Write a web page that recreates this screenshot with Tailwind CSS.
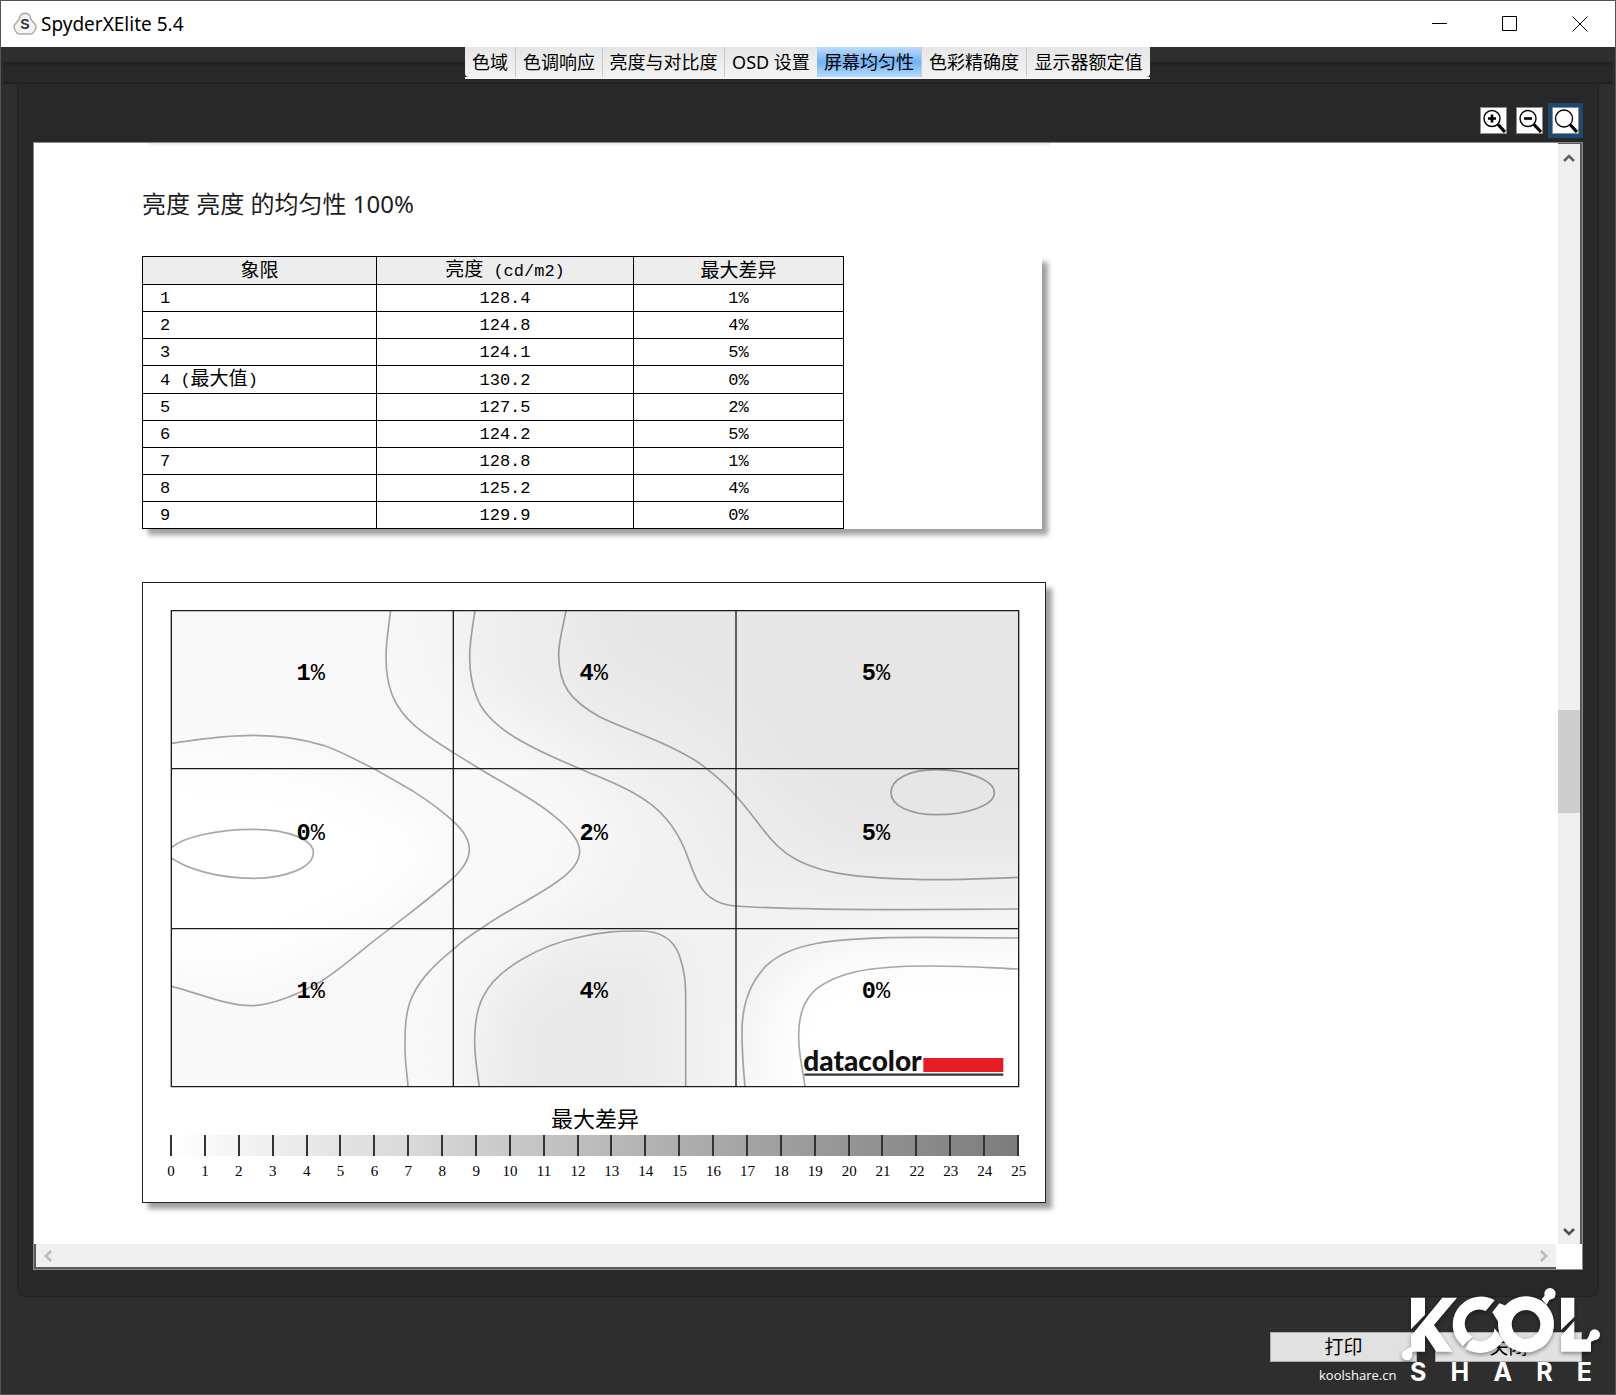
<!DOCTYPE html>
<html lang="zh-CN">
<head>
  <meta charset="UTF-8">
  <meta name="viewport" content="width=device-width, initial-scale=1.0">
  <title>SpyderXElite 5.4</title>
  <script src="https://cdn.jsdelivr.net/npm/@tailwindcss/browser@4"></script>
</head>
<body class="relative flex min-h-screen flex-col border border-[#4e5658] bg-[#2e2e2e] font-['Noto_Sans','Noto_Sans_CJK_SC',sans-serif] text-black">

  <!-- title bar -->
  <header class="flex h-[46px] items-center bg-white">
    <svg class="ml-3 h-6 w-6" viewBox="0 0 24 24" aria-hidden="true">
      <path d="M9 2 Q12 0.500 15 2 Q17.500 3.500 18 7.500 L22.500 13 Q23.500 15 22 18 L20.500 20.500 Q19.500 22 17 22 H7 Q4.500 22 3.500 20.500 L2 18 Q0.500 15 1.500 13 L6 7.500 Q6.500 3.500 9 2 Z" fill="#f4f4f4" stroke="#a9a9a9" stroke-width="1.400"/>
      <text x="12" y="17" text-anchor="middle" font-family="Liberation Sans" font-weight="bold" font-size="14" fill="#333">S</text>
    </svg>
    <h1 class="ml-1 text-[19px] leading-6">SpyderXElite 5.4</h1>
    <div class="ml-auto flex h-full">
      <button class="flex w-[70px] items-center justify-center" aria-label="最小化">
        <svg class="h-4 w-4" viewBox="0 0 16 16" stroke="#000"><path d="M0 7.500H15"/></svg>
      </button>
      <button class="flex w-[70px] items-center justify-center" aria-label="最大化">
        <svg class="h-4 w-4" viewBox="0 0 16 16" stroke="#000" fill="none"><path d="M.5 .5H14.500V14.500H.5Z"/></svg>
      </button>
      <button class="flex w-[70px] items-center justify-center" aria-label="关闭窗口">
        <svg class="h-4 w-4" viewBox="0 0 16 16" stroke="#000"><path d="M.5 .5L15.500 15.500M15.500 .5L.5 15.500"/></svg>
      </button>
    </div>
  </header>

  <!-- tabs -->
  <nav class="mx-0.5 flex h-[37px] items-start justify-center bg-[linear-gradient(#2e2e2e_0_14px,#212121_16px,#282828_20px,#282828_35px,#202020_36px)]">
    <div class="mr-px flex h-8 border-b-2 border-[#f4f4f4] text-lg leading-6">
      <button class="w-[51px] rounded-bl border-r border-[#c9c9c9] bg-linear-to-b from-[#e6e6e6] to-[#f2f2f2]">色域</button>
      <button class="w-[87px] border-r border-[#c9c9c9] bg-linear-to-b from-[#e6e6e6] to-[#f2f2f2]">色调响应</button>
      <button class="w-[122px] border-r border-[#c9c9c9] bg-linear-to-b from-[#e6e6e6] to-[#f2f2f2]">亮度与对比度</button>
      <button class="w-[92px] bg-linear-to-b from-[#e6e6e6] to-[#f4f4f4]">OSD 设置</button>
      <button class="w-[105px] border-r border-[#c9c9c9] bg-linear-to-b from-[#bcdcfb] via-[#6fb2f5] to-[#b4dcff]">屏幕均匀性</button>
      <button class="w-[105px] border-r border-[#c9c9c9] bg-linear-to-b from-[#e6e6e6] to-[#f2f2f2]">色彩精确度</button>
      <button class="w-[123px] rounded-br bg-linear-to-b from-[#e6e6e6] to-[#f2f2f2]">显示器额定值</button>
    </div>
  </nav>

  <main class="mx-4 flex flex-1 flex-col rounded-b-lg border-x border-b border-[#212121] bg-[#282828] px-[15px] pb-[26px] pt-[19px]">
    <!-- zoom tools -->
    <div class="mb-1 flex items-center justify-end gap-[5px]">
      <button class="p-1" aria-label="放大">
        <svg class="h-[27px] w-[27px] border border-[#8c8c8c] bg-white" viewBox="0 0 25 25" fill="none" stroke="#000">
          <circle cx="11" cy="10.500" r="8" stroke-width="1.400"/><path d="M17 16.500L24 24" stroke-width="3.200"/><path d="M7 10.500H15M11 6.500V14.500" stroke-width="2.600"/>
        </svg>
      </button>
      <button class="-ml-1 p-1" aria-label="缩小">
        <svg class="h-[27px] w-[27px] border border-[#8c8c8c] bg-white" viewBox="0 0 25 25" fill="none" stroke="#000">
          <circle cx="11" cy="10.500" r="8" stroke-width="1.400"/><path d="M17 16.500L24 24" stroke-width="3.200"/><path d="M7 10.500H15" stroke-width="2.600"/>
        </svg>
      </button>
      <button class="-ml-1 bg-[#1d4a70] p-1" aria-label="原始大小">
        <svg class="h-[27px] w-[27px] border border-[#8c8c8c] bg-white" viewBox="0 0 25 25" fill="none" stroke="#000">
          <circle cx="11" cy="10.500" r="8.500" stroke-width="1.300"/><path d="M17 16.500L24 24" stroke-width="3.200"/>
        </svg>
      </button>
    </div>

    <!-- report view -->
    <div class="flex flex-1 flex-col border border-[#8a8a8a] bg-white">
      <div class="flex flex-1">
        <div class="flex-1 overflow-hidden pl-[108px]">
          <div class="ml-1.5 h-1 w-[902px] bg-linear-to-b from-[#e9e9e9] to-white"></div>
          <h2 class="mt-[41px] text-2xl leading-8 text-[#1c1c1c]">亮度 亮度 的均匀性 100%</h2>

          <div class="mt-9 w-[900px] bg-white shadow-[6px_6px_5px_#a0a0a0]">
            <table class="w-[702px] table-fixed border-collapse text-center font-['Liberation_Mono','Noto_Sans_CJK_SC',monospace] text-[17px] leading-6">
              <thead>
                <tr class="h-[27px] bg-[#ededed]">
                  <th class="w-[234px] border border-black px-0 pb-0 pt-0.5 text-[19px] font-normal">象限</th>
                  <th class="w-[257px] border border-black px-0 pb-0 pt-0.5 font-normal"><span class="text-[19px]">亮度</span> (cd/m2)</th>
                  <th class="w-[210px] border border-black px-0 pb-0 pt-0.5 text-[19px] font-normal">最大差异</th>
                </tr>
              </thead>
              <tbody id="rows"></tbody>
            </table>
          </div>

          <div class="mt-[53px] w-[904px] border border-[#222] bg-white pb-5 pl-[27px] pr-[25px] pt-[27px] shadow-[6px_6px_5px_#a0a0a0]">
            <svg class="block w-full" viewBox="90 84 2550 1434" role="img" aria-label="均匀性分布">
              <defs>
                <clipPath id="map"><path d="M94 86H2636V1514H94Z"/></clipPath>
                <filter id="soft" filterUnits="userSpaceOnUse" x="-600" y="-600" width="3900" height="2900"><feGaussianBlur stdDeviation="80"/></filter>
              </defs>
              <g clip-path="url(#map)">
                <path d="M0 0H2800V1600H0Z" fill="#f8f8f8"/>
                <g filter="url(#soft)">
                  <path d="M-400 510L340 530L600 590L900 760L900 850L720 1000L340 1180L-400 1120Z" fill="#fff"/>
                  <path d="M880 -400V300L1400 640V880L1000 1200L950 1950H3100V-400Z" fill="#f2f2f2"/>
                  <path d="M1060 -400V300L1400 520L1640 650L1760 920H3100V-400Z" fill="#ececec"/>
                  <path d="M1330 -400V260L1700 440L1950 700L2100 820H3100V-400Z" fill="#e6e6e6"/>
                  <path d="M1060 1950V1260L1250 1120L1600 1080V1950Z" fill="#e9e9e9"/>
                  <path d="M1870 1950V1280L2000 1140L2200 1090H3100V1950Z" fill="#fff"/>
                  <path d="M1960 1950V1300L2100 1160L2200 1110H3100V1950Z" fill="#fff"/>
                </g>
                <g fill="none" stroke="#000" stroke-opacity=".34" stroke-width="5">
                  <path d="M752 86C745 140 738 180 738 225C738 280 745 310 757 340C790 420 860 460 940 512L1015 558C1100 610 1180 650 1240 700C1290 740 1319 775 1319 808C1319 840 1295 870 1250 900C1180 950 1100 985 1030 1035C990 1060 965 1078 940 1102C880 1150 830 1200 808 1265C795 1310 795 1350 795 1400C795 1440 802 1480 804 1514"/>
                  <path d="M94 484C160 475 240 460 340 460C430 460 500 475 550 490C600 507 650 535 705 562L820 628C870 660 910 690 940 718C975 750 988 775 988 802C988 830 970 860 940 888C880 940 820 985 750 1040C680 1090 600 1165 540 1200C470 1240 390 1271 335 1271C260 1271 180 1235 94 1213"/>
                  <path d="M94 797C130 765 230 742 340 742C450 742 520 775 520 812C520 855 440 889 340 889C230 889 140 860 94 828"/>
                  <path d="M1005 86C997 140 989 180 989 225C989 280 1000 320 1010 345C1040 430 1150 490 1320 560C1400 595 1470 620 1530 665C1585 705 1620 760 1645 830C1670 900 1690 965 1788 972C1900 980 2100 983 2300 983L2636 981"/>
                  <path d="M1278 86C1268 140 1256 180 1256 215C1256 310 1290 355 1380 405C1440 435 1520 460 1580 490C1630 515 1665 530 1700 560C1735 588 1765 615 1788 642C1850 710 1880 770 1940 815C2010 865 2110 893 2400 893C2490 893 2560 888 2636 886"/>
                  <path d="M2253 632C2253 590 2310 563 2390 563C2480 563 2563 595 2563 632C2563 670 2480 698 2390 698C2310 698 2253 670 2253 632Z"/>
                  <path d="M1018 1514C1012 1470 1004 1430 1004 1380C1004 1320 1010 1280 1030 1243C1070 1160 1200 1090 1320 1065C1390 1048 1440 1047 1500 1047C1560 1047 1600 1070 1618 1120C1635 1170 1637 1200 1637 1260V1514"/>
                  <path d="M1815 1514C1810 1460 1806 1400 1806 1350C1806 1270 1830 1200 1880 1150C1950 1085 2060 1066 2350 1066L2636 1068"/>
                  <path d="M1995 1514C1988 1460 1976 1420 1976 1365C1976 1300 1990 1255 2030 1220C2090 1175 2170 1152 2370 1152C2480 1152 2540 1157 2636 1161"/>
                </g>
              </g>
              <path d="M94 86H2636V1514H94ZM94 560H2636M94 1040H2636M940 86V1514M1788 86V1514" fill="none" stroke="#1c1c1c" stroke-width="4"/>
              <g id="labels" font-family="Liberation Mono" font-size="71" font-weight="bold" text-anchor="middle"></g>
              <text x="1990" y="1467" font-family="Lato" font-weight="900" font-size="84" fill="#111">datacolor</text>
              <path d="M2350 1428H2590V1470H2350Z" fill="#e81c24"/>
              <path d="M1993 1478H2590" stroke="#333" stroke-width="7"/>
            </svg>

            <p class="mt-4 text-center text-[22px] leading-7">最大差异</p>
            <div id="ticks" class="mr-px mt-[3px] flex h-[21px] justify-between bg-linear-to-r from-white to-[#7c7c7c]"></div>
            <div id="scale" class="-mx-2.5 mb-px mt-[5px] flex justify-between font-['Liberation_Serif',serif] text-[15px] leading-5"></div>
          </div>
        </div>

        <!-- vertical scrollbar -->
        <div class="flex w-6 flex-col items-center border-r-2 border-t border-[#5a5a5a] bg-[#efefef]">
          <button class="flex h-7 items-center" aria-label="向上滚动">
            <svg class="h-3 w-3" viewBox="0 0 12 12" fill="none" stroke="#606060" stroke-width="2.600"><path d="M1 9L6 4L11 9"/></svg>
          </button>
          <div class="flex w-full flex-1 flex-col">
            <div class="grow-[536]"></div>
            <div class="h-[103px] w-full bg-[#cdcdcd]"></div>
            <div class="grow-[405]"></div>
          </div>
          <button class="flex h-6 items-center" aria-label="向下滚动">
            <svg class="h-3 w-3" viewBox="0 0 12 12" fill="none" stroke="#505050" stroke-width="2.600"><path d="M1 3L6 8L11 3"/></svg>
          </button>
        </div>
      </div>

      <!-- horizontal scrollbar -->
      <div class="mr-[26px] flex h-[25px] items-center justify-between border-b-2 border-l-2 border-[#5a5a5a] bg-[#efefef] px-1.5">
        <button aria-label="向左滚动">
          <svg class="h-3 w-3" viewBox="0 0 12 12" fill="none" stroke="#bbb" stroke-width="2.600"><path d="M9 1L4 6L9 11"/></svg>
        </button>
        <button aria-label="向右滚动">
          <svg class="h-3 w-3" viewBox="0 0 12 12" fill="none" stroke="#bbb" stroke-width="2.600"><path d="M3 1L8 6L3 11"/></svg>
        </button>
      </div>
    </div>
  </main>

  <footer class="flex h-[97px] items-start justify-end gap-[18px] pr-[33px] pt-[35px] text-[19px] leading-6">
    <button class="h-[30px] w-[147px] border border-[#adadad] bg-[#e1e1e1]">打印</button>
    <button class="h-[30px] w-[147px] border border-[#adadad] bg-[#e1e1e1]">关闭</button>
  </footer>

  <!-- watermark -->
  <div class="pointer-events-none absolute -bottom-px -right-px h-[185px] w-[376px] text-white">
    <svg class="absolute inset-0 h-full w-full drop-shadow-[0_2px_2px_rgba(0,0,0,0.4)]" viewBox="0 0 1128 555" fill="#fff" aria-hidden="true">
      <path d="M513 263H555V314L513 358Z"/>
      <path d="M513 378L607 263H651L582 345L638 425H589L555 375V425H519L511 436L494 422L513 410Z"/>
      <circle cx="501" cy="435" r="16"/>
      <path d="M764 271A84 84 0 0 0 652 390L668 408L698 380A43 43 0 0 1 737 303Z"/>
      <path d="M688 394L676 416A84 84 0 0 0 790 392L764 355A43 43 0 0 1 700 388Z"/>
      <path fill-rule="evenodd" d="M858 259A84 84 0 1 1 857.900 259ZM858 300A43 43 0 1 0 858.100 300Z"/>
      <path d="M757 307L778 280L810 292L800 330L784 350Z"/>
      <path d="M905 268L918 252L946 262L928 270L920 285Z"/>
      <circle cx="930" cy="251" r="17"/>
      <path d="M963 263H1003V321L963 360Z"/>
      <path d="M963 378L1003 333V388H1041L1052 368L1066 390L1053 395V425H963Z"/>
      <circle cx="1064" cy="374" r="16"/>
    </svg>
    <div class="absolute bottom-1.5 left-[79px] right-6 flex items-end">
      <span class="mb-1 w-[91px] font-['Open_Sans',sans-serif] text-[13px] font-medium leading-5">koolshare.cn</span>
      <div class="flex flex-1 justify-between font-['Inter',sans-serif] text-[25px] font-bold leading-[34px]">
        <span>S</span><span>H</span><span>A</span><span>R</span><span>E</span>
      </div>
    </div>
  </div>

  <script>
    const quadrants = [
      [128.4, 1], [124.8, 4], [124.1, 5],
      [130.2, 0], [127.5, 2], [124.2, 5],
      [128.8, 1], [125.2, 4], [129.9, 0]
    ];
    const rows = document.getElementById('rows');
    const labels = document.getElementById('labels');
    const ticks = document.getElementById('ticks');
    const scale = document.getElementById('scale');

    const labelX = [512, 1361, 2208];
    const labelY = [295, 773, 1249];

    quadrants.forEach(([lum, diff], i) => {
      const max = lum === 130.2 ? ' (<span class="text-[19px]">最大值</span>)' : '';
      rows.innerHTML += `<tr class="h-[27px]">
        <td class="border border-black pb-0 pl-[17px] pr-0 pt-0.5 text-left">${i + 1}${max}</td>
        <td class="border border-black px-0 pb-0 pt-0.5">${lum}</td>
        <td class="border border-black px-0 pb-0 pt-0.5">${diff}%</td>
      </tr>`;
      labels.innerHTML += `<text x="${labelX[i % 3]}" y="${labelY[Math.floor(i / 3)]}">${diff}<tspan font-weight="normal">%</tspan></text>`;
    });

    for (let n = 0; n <= 25; n++) {
      ticks.innerHTML += '<span class="w-0.5 bg-[#333]"></span>';
      scale.innerHTML += `<span class="w-[22px] text-center">${n}</span>`;
    }
  </script>
</body>
</html>
